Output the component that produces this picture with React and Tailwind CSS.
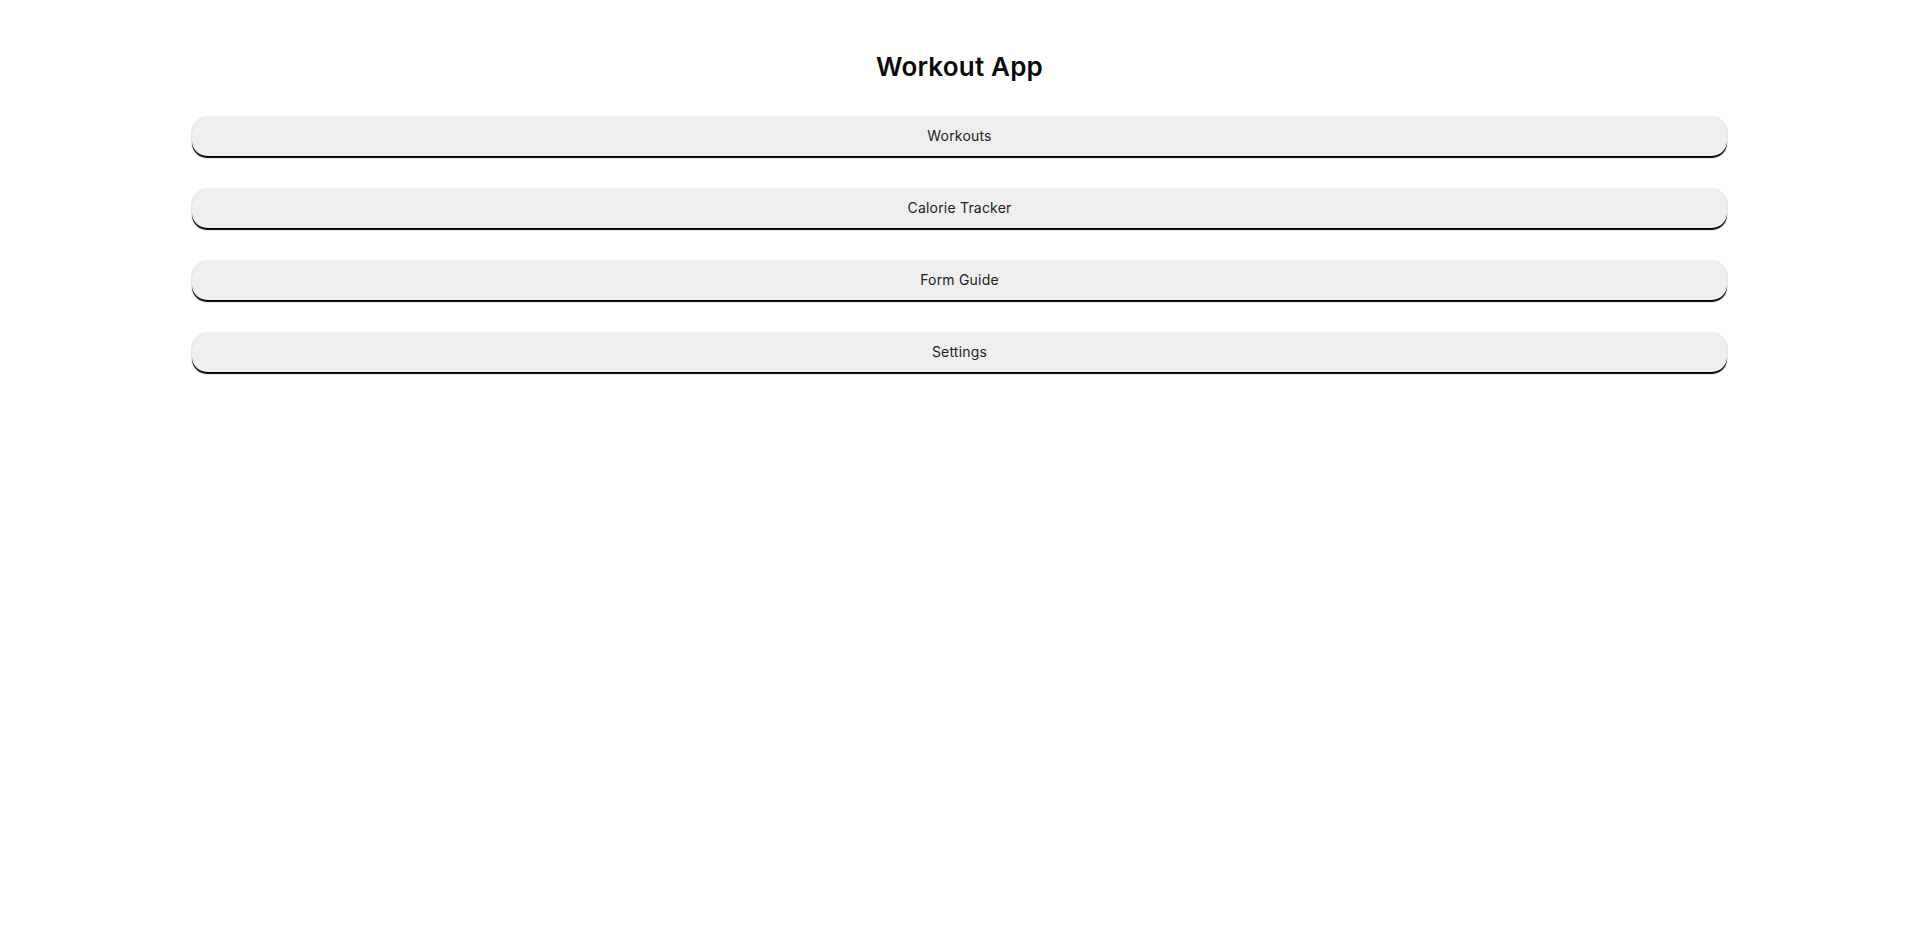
export default function App() {
  const items = ["Workouts", "Calorie Tracker", "Form Guide", "Settings"];
  return (
    <div className="min-h-screen bg-white font-['Inter',sans-serif] text-[#111]">
      <h1 className="pt-[49px] text-center text-[26px] leading-[36px] font-semibold tracking-[0.2px] text-[#0a0a0a]">
        Workout App
      </h1>
      <div className="mx-auto mt-[31px] flex w-[80%] flex-col gap-[32px]">
        {items.map((t) => (
          <button
            key={t}
            className="h-[40px] w-full rounded-[15px] bg-[#efefef] pb-[2px] text-[14px] tracking-[0.2px] text-[#222] shadow-[0_2px_1px_rgba(0,0,0,1)]"
          >
            {t}
          </button>
        ))}
      </div>
    </div>
  );
}
